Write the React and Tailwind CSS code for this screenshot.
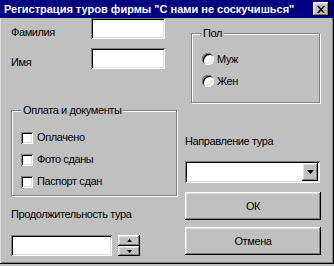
import React from "react";

const sunken =
  "bg-white shadow-[inset_1px_1px_0_#808080,inset_-1px_-1px_0_#ffffff,inset_2px_2px_0_#000000,inset_-2px_-2px_0_#dfdfdf]";
const raised =
  "bg-[#c0c0c0] shadow-[inset_-1px_-1px_0_#000000,inset_1px_1px_0_#ffffff,inset_-2px_-2px_0_#808080,inset_2px_2px_0_#dfdfdf]";

function Group({ title, className, children }) {
  return (
    <div
      className={
        "relative border border-[#808080] shadow-[inset_1px_1px_0_#ffffff,1px_1px_0_#ffffff] " +
        className
      }
    >
      <span className="absolute left-[9px] top-[-8px] bg-[#c0c0c0] px-[2px] leading-[14px]">
        {title}
      </span>
      {children}
    </div>
  );
}

function Radio({ label }) {
  return (
    <div className="flex items-center gap-[3px] h-[14px]">
      <span className="w-[12px] h-[12px] rounded-full bg-white shadow-[inset_1px_1px_0_#808080,inset_-1px_-1px_0_#ffffff,inset_2px_2px_0_#000000,inset_-2px_-2px_0_#dfdfdf]" />
      <span>{label}</span>
    </div>
  );
}

function Check({ label }) {
  return (
    <div className="flex items-center gap-[4px] h-[13px]">
      <span className={"w-[12px] h-[12px] " + sunken} />
      <span>{label}</span>
    </div>
  );
}

export default function App() {
  return (
    <div className="w-[334px] h-[266px] bg-[#c0c0c0] font-['Liberation_Sans',Arial,sans-serif] text-[11px] tracking-[-0.4px] text-black overflow-hidden">
      <div className="h-[264px] flex flex-col shadow-[inset_-1px_-1px_0_#000000,inset_1px_0_0_#dfdfdf,inset_-2px_-2px_0_#808080]">
        <div className="h-[18px] bg-[#000080] flex items-center justify-between pl-[4px] pr-[5px]">
          <span className="text-white font-bold text-[11px] tracking-[0px] leading-none whitespace-nowrap">
            Регистрация туров фирмы "С нами не соскучишься"
          </span>
          <span className={"w-[16px] h-[14px] flex items-center justify-center " + raised}>
            <svg width="8" height="7" viewBox="0 0 8 7">
              <path d="M0 0h2l2 2.5L6 0h2L5 3.5 8 7H6L4 4.5 2 7H0l3-3.5z" fill="#000" />
            </svg>
          </span>
        </div>
        <div className="flex pl-[11px] gap-[8px]">
          {/* left column */}
          <div className="w-[166px] flex flex-col">
            <div className="flex items-center h-[21px]">
              <span className="w-[80px] pt-[8px]">Фамилия</span>
              <span className={"w-[74px] h-[21px] " + sunken} />
            </div>
            <div className="flex items-center h-[21px] mt-[9px]">
              <span className="w-[80px] pt-[8px]">Имя</span>
              <span className={"w-[74px] h-[21px] " + sunken} />
            </div>
            <Group title="Оплата и документы" className="mt-[41px] h-[86px]">
              <div className="flex flex-col gap-[9px] pl-[9px] pt-[20px]">
                <Check label="Оплачено" />
                <Check label="Фото сданы" />
                <Check label="Паспорт сдан" />
              </div>
            </Group>
            <div className="mt-[12px] leading-[13px]">Продолжительность тура</div>
            <div className="flex mt-[14px] gap-[6px]">
              <span className={"w-[101px] h-[21px] " + sunken} />
              <div className="flex flex-col w-[22px] h-[21px]">
                <span className={"h-[11px] flex items-center justify-center " + raised}>
                  <svg width="5" height="3" viewBox="0 0 5 3">
                    <path d="M2.5 0L5 3H0z" fill="#000" />
                  </svg>
                </span>
                <span className={"h-[10px] flex items-center justify-center " + raised}>
                  <svg width="5" height="3" viewBox="0 0 5 3">
                    <path d="M0 0h5L2.5 3z" fill="#000" />
                  </svg>
                </span>
              </div>
            </div>
          </div>
          {/* right column */}
          <div className="w-[136px] flex flex-col">
            <Group title="Пол" className="mt-[15px] ml-[6px] w-[129px] h-[70px]">
              <div className="flex flex-col gap-[8px] pl-[10px] pt-[18px]">
                <Radio label="Муж" />
                <Radio label="Жен" />
              </div>
            </Group>
            <div className="mt-[32px] leading-[13px]">Направление тура</div>
            <div className={"mt-[13px] w-[135px] h-[22px] flex justify-end items-stretch p-[2px] " + sunken}>
              <span className={"w-[16px] flex items-center justify-center " + raised}>
                <svg width="7" height="4" viewBox="0 0 7 4">
                  <path d="M0 0h7L3.5 4z" fill="#000" />
                </svg>
              </span>
            </div>
            <button className={"mt-[9px] h-[28px] w-[136px] " + raised}>ОК</button>
            <button className={"mt-[7px] h-[28px] w-[136px] " + raised}>Отмена</button>
          </div>
        </div>
      </div>
    </div>
  );
}
